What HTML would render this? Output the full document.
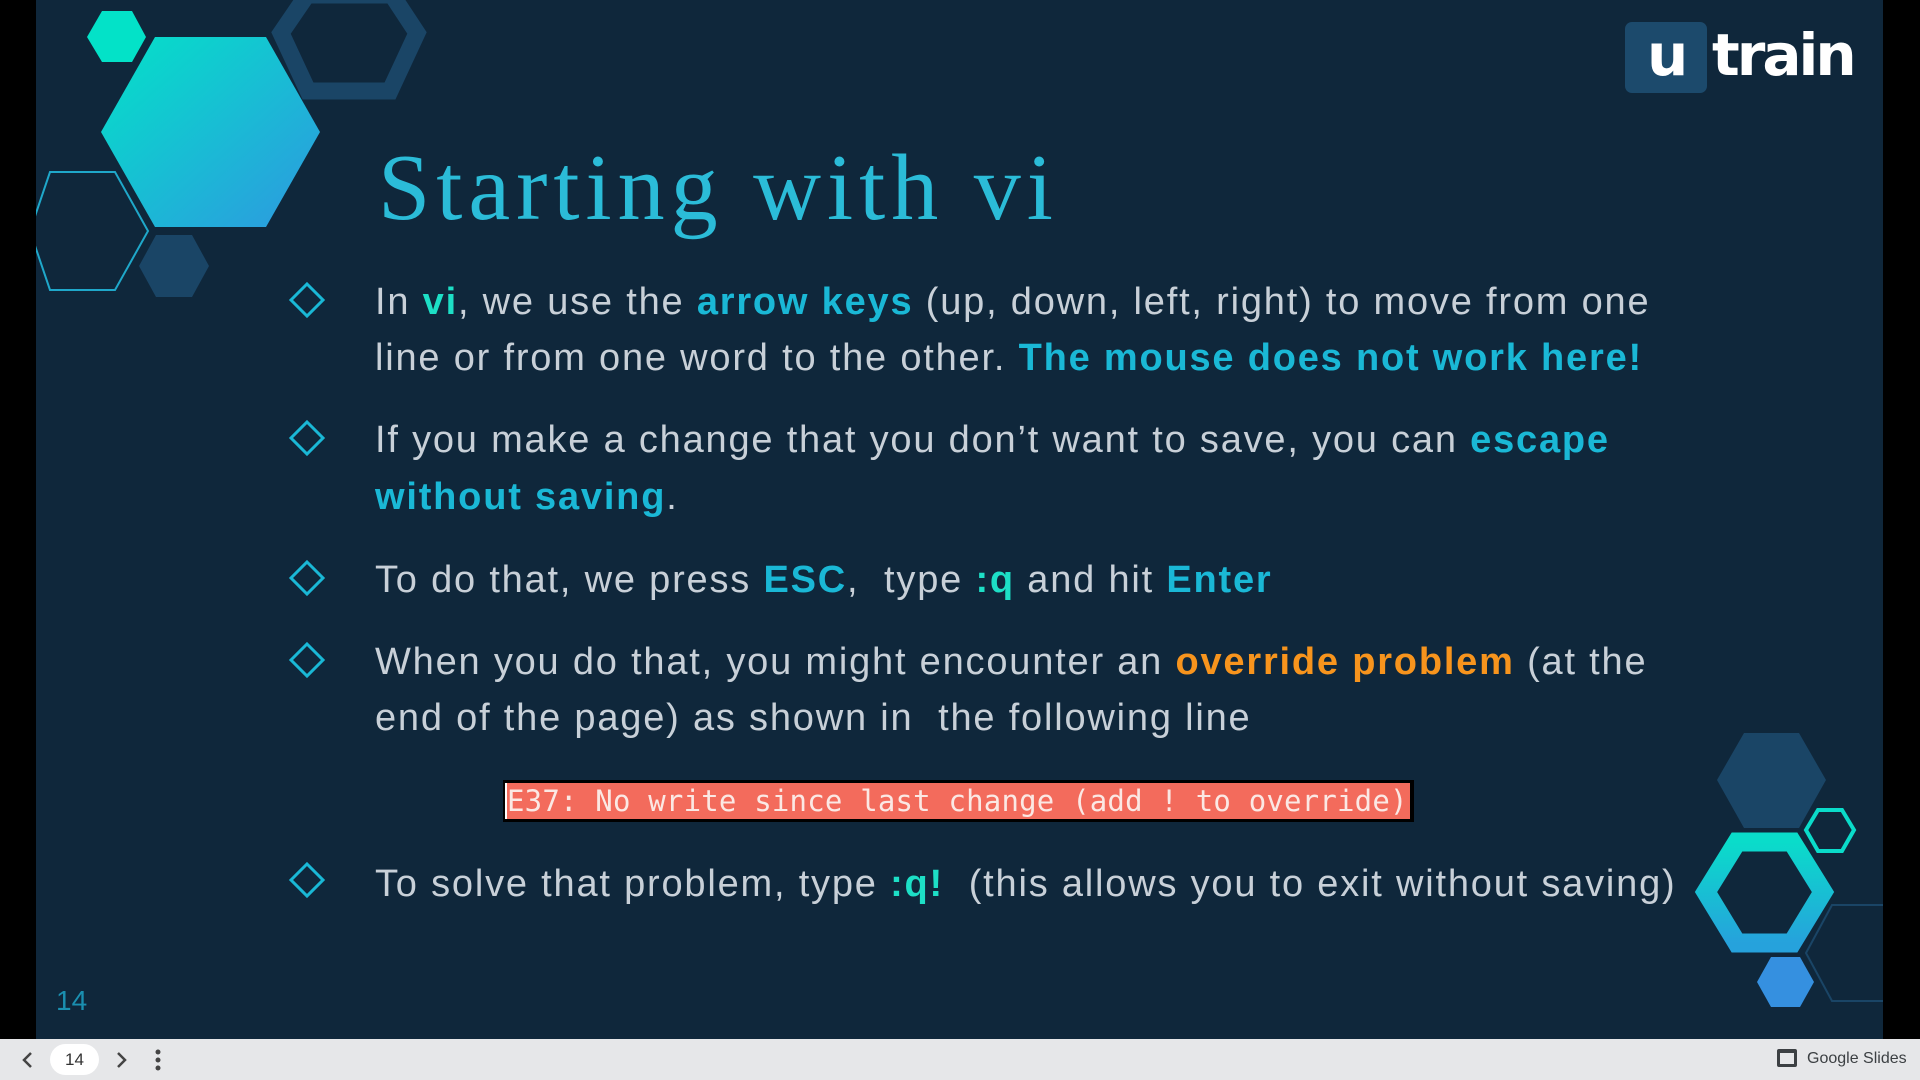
<!DOCTYPE html>
<html><head><meta charset="utf-8"><style>
*{margin:0;padding:0;box-sizing:border-box}
html,body{width:1920px;height:1080px;overflow:hidden;background:#000}
.slide{position:absolute;left:36px;top:0;width:1847px;height:1039px;background:#0f273b;overflow:hidden}
.abs{position:absolute;white-space:nowrap}
.t{font-family:"Liberation Sans",sans-serif;font-size:38px;color:#c8d0d8;letter-spacing:1.8px}
.c{color:#1ab8d6;font-weight:bold}
.g{color:#1ddfc6;font-weight:bold}
.o{color:#f7941d;font-weight:bold}
.bar{position:absolute;left:0;top:1039px;width:1920px;height:41px;background:#e6e7e9}
</style></head><body>
<div class="slide"></div>
<svg class="abs" style="left:0;top:0" width="1920" height="1039">
<defs>
<linearGradient id="g1" x1="0" y1="0" x2="1" y2="1"><stop offset="0" stop-color="#03e2c8"/><stop offset="1" stop-color="#2e98e0"/></linearGradient>
<linearGradient id="g2" x1="0" y1="0" x2="0" y2="1"><stop offset="0" stop-color="#0adcca"/><stop offset="1" stop-color="#26a2dc"/></linearGradient>
<clipPath id="cl"><rect x="36" y="0" width="1847" height="1039"/></clipPath>
</defs>
<g clip-path="url(#cl)">
<polygon points="281,33 307,-5 392,-5 417,33 390,91 308,91" fill="none" stroke="#1a4566" stroke-width="17"/>
<polygon points="87,37 102,11 132,11 146,37 132,62 102,62" fill="#03e2c8"/>
<polygon points="101,132 155,37 266,37 320,132 266,227 155,227" fill="url(#g1)"/>
<polygon points="30,231 50,172 115,172 148,231 115,290 50,290" fill="none" stroke="#1fa8ca" stroke-width="2"/>
<polygon points="139,266 156,235 192,235 209,266 192,297 156,297" fill="#1a4566"/>
<polygon points="1717,780 1744,733 1799,733 1826,780 1799,828 1744,828" fill="#1a4566"/>
<polygon points="1806,953 1832,905 1900,905 1900,1001 1832,1001" fill="none" stroke="#1a4566" stroke-width="2"/>
<polygon points="1706,892 1737,842 1792,842 1823,892 1792,943 1737,943" fill="none" stroke="url(#g2)" stroke-width="19"/>
<polygon points="1806,830 1818,810 1842,810 1854,830 1842,851 1818,851" fill="none" stroke="#0adcca" stroke-width="4"/>
<polygon points="1757,982 1771,957 1800,957 1814,982 1800,1007 1771,1007" fill="#3590e0"/>
</g>
<g fill="none" stroke="#1ab8d6" stroke-width="3">
<polygon points="307,284 323,300 307,316 291,300"/>
<polygon points="307,422 323,438 307,454 291,438"/>
<polygon points="307,562 323,578 307,594 291,578"/>
<polygon points="307,644 323,660 307,676 291,660"/>
<polygon points="307,864 323,880 307,896 291,880"/>
</g>
</svg>
<div class="abs" style="left:1625px;top:22px;width:82px;height:71px;background:#1c4a6c;border-radius:7px"></div>
<div class="abs" style="left:1647px;top:21px;font:bold 58px 'DejaVu Sans',sans-serif;color:#fff">u</div>
<div class="abs" style="left:1712px;top:21px;font:bold 58px 'DejaVu Sans',sans-serif;color:#fff;letter-spacing:-3px">train</div>
<div class="abs" style="left:378px;top:134px;font:300 94px 'Liberation Serif',serif;color:#2bbcd8;letter-spacing:6px">Starting with vi</div>
<div class="abs t" style="left:375px;top:281px">In <span class="g">vi</span>, we use the <span class="c">arrow keys</span> (up, down, left, right) to move from one</div>
<div class="abs t" style="left:375px;top:337px">line or from one word to the other. <span class="c">The mouse does not work here!</span></div>
<div class="abs t" style="left:375px;top:419px">If you make a change that you don’t want to save, you can <span class="c">escape</span></div>
<div class="abs t" style="left:375px;top:476px"><span class="c">without saving</span>.</div>
<div class="abs t" style="left:375px;top:559px">To do that, we press <span class="c">ESC</span>,&nbsp; type <span class="g">:q</span> and hit <span class="c">Enter</span></div>
<div class="abs t" style="left:375px;top:641px">When you do that, you might encounter an <span class="o">override problem</span> (at the</div>
<div class="abs t" style="left:375px;top:697px">end of the page) as shown in&nbsp; the following line</div>
<div class="abs" style="left:503px;top:780px;width:911px;height:42px;background:#000;padding:3px 4px 3px 2px">
<div style="width:100%;height:100%;background:#f36b5c;border-left:2px solid #fff;font:29px 'DejaVu Sans Mono',monospace;color:#fbe8e4;line-height:36px;white-space:nowrap;overflow:hidden;letter-spacing:0.2px">E37: No write since last change (add ! to override)</div></div>
<div class="abs t" style="left:375px;top:863px">To solve that problem, type <span class="g">:q!</span>&nbsp; (this allows you to exit without saving)</div>
<div class="abs" style="left:56px;top:985px;font:300 28px 'Liberation Sans',sans-serif;color:#1a8fb0">14</div>
<div class="bar"></div>
<svg class="abs" style="left:0;top:1039px" width="200" height="41">
<path d="M31 14 L24 21 L31 28" fill="none" stroke="#444" stroke-width="2.5"/>
<path d="M118 14 L125 21 L118 28" fill="none" stroke="#444" stroke-width="2.5"/>
<circle cx="158" cy="13" r="2.5" fill="#444"/><circle cx="158" cy="21" r="2.5" fill="#444"/><circle cx="158" cy="29" r="2.5" fill="#444"/>
</svg>
<div class="abs" style="left:50px;top:1044px;width:49px;height:31px;background:#fff;border-radius:16px;text-align:center;font:17px/31px 'Liberation Sans',sans-serif;color:#333">14</div>
<div class="abs" style="left:1777px;top:1049px;width:20px;height:18px;border:3px solid #3c4043;border-top-width:4px;border-radius:2px"></div>
<div class="abs" style="left:1807px;top:1050px;font:16px 'Liberation Sans',sans-serif;color:#3c4043">Google Slides</div>
</body></html>
